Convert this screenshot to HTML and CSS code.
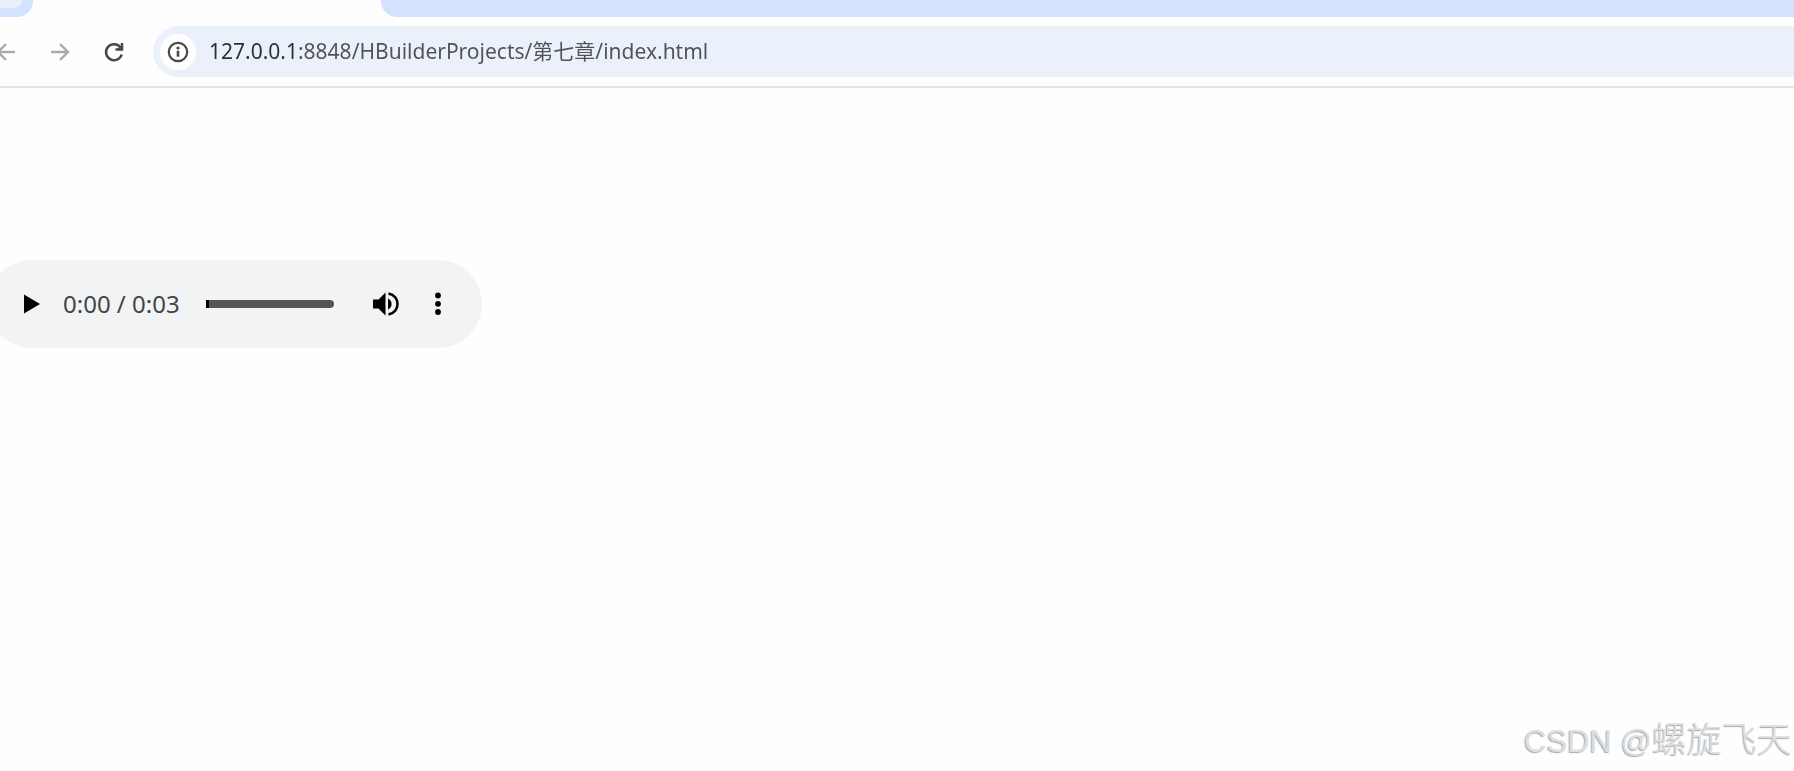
FILE: index.html
```html
<!DOCTYPE html>
<html lang="zh-CN">
<head>
<meta charset="utf-8">
<title>index.html</title>
<link rel="stylesheet" href="styles.css">
</head>
<body>
<header class="browser">
  <div class="tabs">
    <div class="tabs-start"><span class="tab-search"></span></div>
    <div class="tab-active"></div>
    <div class="tabs-end"></div>
  </div>
  <div class="toolbar">
    <nav class="nav">
      <button class="icon-button faded" aria-label="Back"><svg width="24" height="24" viewBox="0 0 24 24"><path d="M21 12H4M12 4l-8 8 8 8"/></svg></button>
      <button class="icon-button faded" aria-label="Forward"><svg width="24" height="24" viewBox="0 0 24 24"><path d="M3 12h17M12 4l8 8-8 8"/></svg></button>
      <button class="icon-button" aria-label="Reload"><svg width="24" height="24" viewBox="0 0 24 24"><path class="bold" d="M19.7 14.5A8 8 0 1 1 18.5 7.5"/><path class="bold" d="M20 3v6.5h-6.5"/><path class="solid" d="M20 4.5v5h-5z"/></svg></button>
    </nav>
    <div class="address">
      <button class="site-info" aria-label="Site information"><svg width="24" height="24" viewBox="0 0 24 24"><circle class="ring" cx="12" cy="12" r="9.2"/><path class="stem" d="M12 10.7v6"/><circle class="solid" cx="12" cy="8" r="1.6"/></svg></button>
      <input class="url" type="text" aria-label="Address" value="127.0.0.1:8848/HBuilderProjects/第七章/index.html">
    </div>
  </div>
</header>
<main class="page">
  <section class="player" aria-label="Audio player">
    <button class="control" aria-label="Play"><svg width="24" height="24" viewBox="0 0 24 24"><path d="M4 2.5v19L20 12z"/></svg></button>
    <span class="time">0:00 / 0:03</span>
    <input class="track" type="range" min="0" max="3" value="0" step="1" aria-label="Seek">
    <button class="control" aria-label="Mute"><svg width="28" height="28" viewBox="0 0 28 28"><path d="M1 9.5h5.500l7-7v23l-7-7H1zM16 8.500c2.400 1 3.600 3.100 3.600 5.500s-1.200 4.500-3.600 5.500z"/><path class="wave" d="M16.500 3.400c5.800 1.300 9 5.700 9 10.600s-3.200 9.300-9 10.600"/></svg></button>
    <button class="control" aria-label="More options"><svg width="28" height="28" viewBox="0 0 28 28"><circle cx="14" cy="5.500" r="2.900"/><circle cx="14" cy="13.800" r="2.900"/><circle cx="14" cy="22" r="2.900"/></svg></button>
  </section>
  <footer class="credit">CSDN @<span class="author">螺旋飞天</span></footer>
</main>
</body>
</html>
```
FILE: styles.css
```css
* {
  box-sizing: border-box;
}

body {
  margin: 0;
  min-height: 100vh;
  display: flex;
  flex-direction: column;
  background: #fefefe;
  font-family: "Noto Sans", "Noto Sans CJK SC", sans-serif;
}

button {
  display: flex;
  align-items: center;
  justify-content: center;
  flex: none;
  padding: 0;
  border: 0;
  background: none;
}

.browser {
  border-bottom: 2px solid #e3e3e3;
}

.tabs {
  display: flex;
  height: 17px;
}

.tabs-start {
  width: 33px;
  background: #d3e2fd;
  border-bottom-right-radius: 16px;
}

.tab-search {
  display: block;
  width: 22px;
  height: 8px;
  background: #e9f0fd;
  border-bottom-right-radius: 12px;
}

.tab-active {
  width: 348px;
}

.tabs-end {
  flex: 1;
  background: #d3e2fd;
  border-bottom-left-radius: 16px;
}

.toolbar {
  display: flex;
  align-items: center;
  padding: 9px 0;
}

.nav {
  display: flex;
  gap: 30px;
  margin-left: -6px;
  width: 159px;
}

.icon-button svg,
.site-info svg {
  fill: none;
  stroke: #484848;
  stroke-width: 2;
}

.icon-button.faded svg {
  stroke: #ababab;
  stroke-width: 2.4;
}

.bold {
  stroke-width: 2.5;
}

.ring {
  stroke-width: 2.2;
}

.stem {
  stroke-width: 2.6;
}

.icon-button .solid,
.site-info .solid {
  fill: #484848;
  stroke: none;
}

.address {
  flex: 1;
  display: flex;
  align-items: center;
  gap: 13px;
  height: 51px;
  padding-left: 7px;
  background: #ebf1fa;
  border-radius: 26px 0 0 26px;
}

.site-info {
  width: 36px;
  height: 36px;
  border-radius: 50%;
  background: #fefefe;
}

/* The host is darker than the rest of the address. */
.url {
  flex: 1;
  min-width: 0;
  padding: 0 0 3px;
  border: 0;
  outline: 0;
  background: linear-gradient(to right, #2c2d30 88px, #505255 88px);
  background-clip: text;
  color: transparent;
  caret-color: #2c2d30;
  font: 21px "Noto Sans", "Noto Sans CJK SC", sans-serif;
}

.page {
  flex: 1;
  display: flex;
  flex-direction: column;
  justify-content: space-between;
  padding-top: 172px;
}

.player {
  display: flex;
  align-items: center;
  width: 494px;
  height: 88px;
  margin-left: -12px;
  padding-left: 32px;
  background: #f1f3f4;
  border-radius: 44px;
}

.time {
  margin-left: 19px;
  padding-bottom: 2px;
  color: #444;
  font-size: 24px;
  white-space: nowrap;
}

.track {
  appearance: none;
  flex: 1;
  min-width: 0;
  height: 8px;
  margin: 0 38px 0 26px;
  border-radius: 4px;
  background: #555;
}

.track::-webkit-slider-thumb {
  appearance: none;
  width: 3px;
  height: 8px;
  background: #000;
}

.control svg {
  fill: #000;
}

.control .wave {
  fill: none;
  stroke: #000;
  stroke-width: 2.6;
}

.control:last-child {
  margin: 0 30px 0 24px;
}

.credit {
  padding: 0 2px 9px;
  text-align: right;
  color: #dedede;
  font: 300 31px "Liberation Sans", "Noto Sans CJK SC", sans-serif;
  text-shadow: -1px 1px 1px #aaa;
}

.author {
  font-size: 35px;
}
```
